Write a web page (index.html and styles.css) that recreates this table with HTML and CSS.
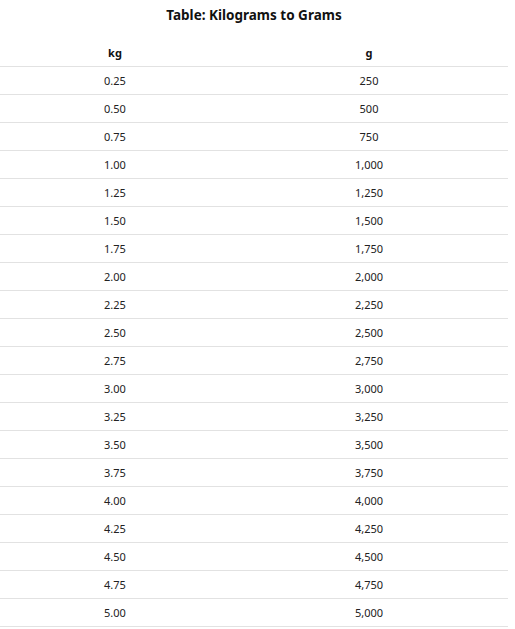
FILE: index.html
```html
<!DOCTYPE html>
<html>
<head>
<meta charset="utf-8">
<link rel="stylesheet" href="styles.css">
</head>
<body>
<table class="conv">
<caption class="conv-title">Table: Kilograms to Grams</caption>
<thead>
<tr><th class="c1">kg</th><th class="c2">g</th></tr>
</thead>
<tbody>
<tr><td>0.25</td><td>250</td></tr>
<tr><td>0.50</td><td>500</td></tr>
<tr><td>0.75</td><td>750</td></tr>
<tr><td>1.00</td><td>1,000</td></tr>
<tr><td>1.25</td><td>1,250</td></tr>
<tr><td>1.50</td><td>1,500</td></tr>
<tr><td>1.75</td><td>1,750</td></tr>
<tr><td>2.00</td><td>2,000</td></tr>
<tr><td>2.25</td><td>2,250</td></tr>
<tr><td>2.50</td><td>2,500</td></tr>
<tr><td>2.75</td><td>2,750</td></tr>
<tr><td>3.00</td><td>3,000</td></tr>
<tr><td>3.25</td><td>3,250</td></tr>
<tr><td>3.50</td><td>3,500</td></tr>
<tr><td>3.75</td><td>3,750</td></tr>
<tr><td>4.00</td><td>4,000</td></tr>
<tr><td>4.25</td><td>4,250</td></tr>
<tr><td>4.50</td><td>4,500</td></tr>
<tr><td>4.75</td><td>4,750</td></tr>
<tr><td>5.00</td><td>5,000</td></tr>
</tbody>
</table>
</body>
</html>
```
FILE: styles.css
```css
html, body {
  margin: 0;
  padding: 0;
  background: #fff;
}
body {
  font-family: "Noto Sans", "Open Sans", sans-serif;
  color: #222;
}
.conv {
  width: 508px;
  border-collapse: collapse;
  table-layout: fixed;
}
.conv-title {
  font-size: 13.5px;
  font-weight: 700;
  color: #111;
  height: 39px;
  line-height: 31px;
  text-align: center;
}
.c1 { width: 230px; }
.c2 { width: 278px; }
.conv th {
  font-size: 11px;
  font-weight: 700;
  color: #111;
  height: 27px;
  padding: 0;
  text-align: center;
  border-bottom: 1px solid #e2e2e2;
}
.conv td {
  font-size: 11px;
  height: 27px;
  padding: 0;
  text-align: center;
  border-bottom: 1px solid #e2e2e2;
}
```
